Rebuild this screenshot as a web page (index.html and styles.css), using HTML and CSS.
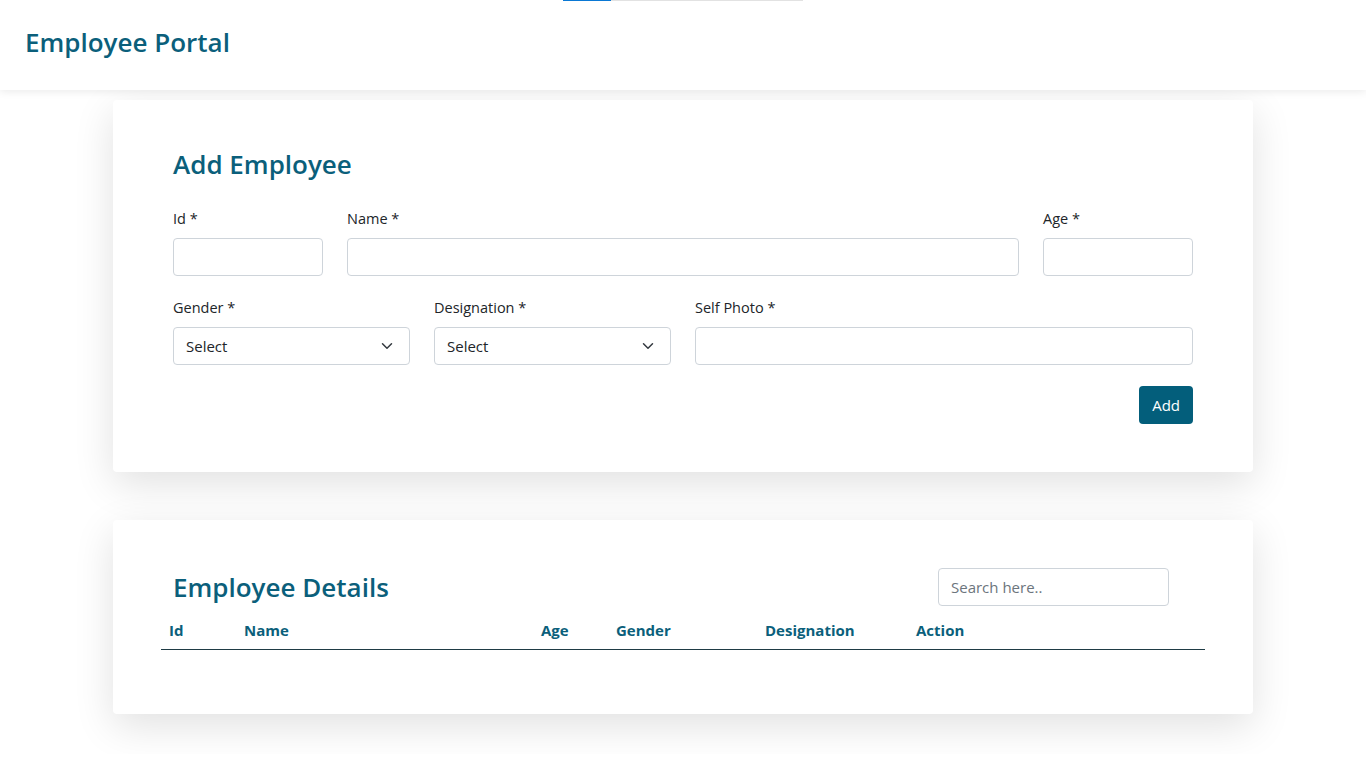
FILE: index.html
```html
<!DOCTYPE html>
<html lang="en">
<head>
    <meta charset="UTF-8">
    <meta name="viewport" content="width=device-width, initial-scale=1.0">
    <title>Employee Portal</title>
    <link rel="stylesheet" href="styles.css">
</head>
<body>

<div class="loader"><div class="loader-fill"></div></div>

<header>
    <h1>Employee Portal</h1>
</header>

<main>
    <section class="card add-card">
        <h2>Add Employee</h2>
        <form class="emp-form">
            <div class="row row-top">
                <div class="field">
                    <label>Id *</label>
                    <input type="text">
                </div>
                <div class="field">
                    <label>Name *</label>
                    <input type="text">
                </div>
                <div class="field">
                    <label>Age *</label>
                    <input type="text">
                </div>
            </div>
            <div class="row row-bottom">
                <div class="field">
                    <label>Gender *</label>
                    <div class="select">Select
                        <svg width="12" height="12" viewBox="0 0 16 16"><path d="M2 5l6 6 6-6" fill="none" stroke="#343a40" stroke-width="2" stroke-linecap="round" stroke-linejoin="round"/></svg>
                    </div>
                </div>
                <div class="field">
                    <label>Designation *</label>
                    <div class="select">Select
                        <svg width="12" height="12" viewBox="0 0 16 16"><path d="M2 5l6 6 6-6" fill="none" stroke="#343a40" stroke-width="2" stroke-linecap="round" stroke-linejoin="round"/></svg>
                    </div>
                </div>
                <div class="field">
                    <label>Self Photo *</label>
                    <input type="text">
                </div>
            </div>
            <div class="actions">
                <button type="button">Add</button>
            </div>
        </form>
    </section>

    <section class="card details-card">
        <div class="details-head">
            <h2>Employee Details</h2>
            <input class="search" type="text" placeholder="Search here..">
        </div>
        <table>
            <thead>
                <tr>
                    <th class="c-id">Id</th>
                    <th class="c-name">Name</th>
                    <th class="c-age">Age</th>
                    <th class="c-gender">Gender</th>
                    <th class="c-desig">Designation</th>
                    <th>Action</th>
                </tr>
            </thead>
            <tbody></tbody>
        </table>
    </section>
</main>

</body>
</html>
```

FILE: styles.css
```css
body {
    font-family: 'Open Sans', 'Noto Sans', sans-serif;
    margin: 0;
    padding: 0;
    background-color: #ffffff;
    color: #212529;
}
.loader {
    position: absolute;
    top: 0;
    left: 563px;
    width: 240px;
    height: 1px;
    background: #e2e2e2;
    z-index: 10;
}
.loader-fill {
    width: 48px;
    height: 1px;
    background: #0a78d4;
}
header {
    position: relative;
    height: 90px;
    display: flex;
    align-items: center;
    padding: 0 25px;
    background: #ffffff;
    box-shadow: 0 2px 8px rgba(0,0,0,0.08);
}
h1 {
    margin: 0 0 6px;
    font-size: 26px;
    font-weight: 600;
    color: #0b5f7b;
}
main {
    width: 1140px;
    margin: 10px auto 0;
    padding-bottom: 40px;
}
.card {
    background: #ffffff;
    border-radius: 4px;
    box-shadow: 0 12px 40px rgba(0,0,0,0.12);
}
.add-card {
    padding: 46px 60px 48px;
}
h2 {
    margin: 0;
    font-size: 26px;
    font-weight: 600;
    color: #0b5f7b;
}
.emp-form {
    margin-top: 26px;
}
.row {
    display: grid;
    gap: 24px;
    margin-bottom: 21px;
}
.row-top {
    grid-template-columns: 150px 1fr 150px;
}
.row-bottom {
    grid-template-columns: 237px 237px 1fr;
}
.field label {
    display: block;
    font-size: 14.5px;
    line-height: 22px;
    margin-bottom: 8px;
}
.field input, .select, .search {
    box-sizing: border-box;
    width: 100%;
    height: 38px;
    border: 1px solid #ced4da;
    border-radius: 4px;
    font-family: inherit;
    font-size: 15px;
    padding: 0 12px;
    background: #fff;
}
.select {
    display: flex;
    align-items: center;
    justify-content: space-between;
    padding-right: 16px;
    color: #212529;
}
.actions {
    display: flex;
    justify-content: flex-end;
    margin-top: 20px;
}
button {
    height: 38px;
    padding: 0 13px;
    font-family: inherit;
    font-size: 15px;
    background: #035e7b;
    color: #ffffff;
    border: none;
    border-radius: 4px;
}
.details-card {
    margin-top: 48px;
    padding: 48px 48px 64px;
}
.details-head {
    display: flex;
    justify-content: space-between;
    align-items: center;
    padding: 0 36px 0 12px;
}
.search {
    width: 231px;
    color: #6c757d;
}
.search::placeholder {
    color: #6c757d;
}
table {
    width: 100%;
    border-collapse: collapse;
    margin-top: 7px;
}
th {
    text-align: left;
    font-size: 15px;
    font-weight: 700;
    color: #0b5f7b;
    padding: 7px 8px 9px;
    border-bottom: 1px solid #1f3b45;
}
.c-id { width: 59px; }
.c-name { width: 281px; }
.c-age { width: 59px; }
.c-gender { width: 133px; }
.c-desig { width: 135px; }
```
